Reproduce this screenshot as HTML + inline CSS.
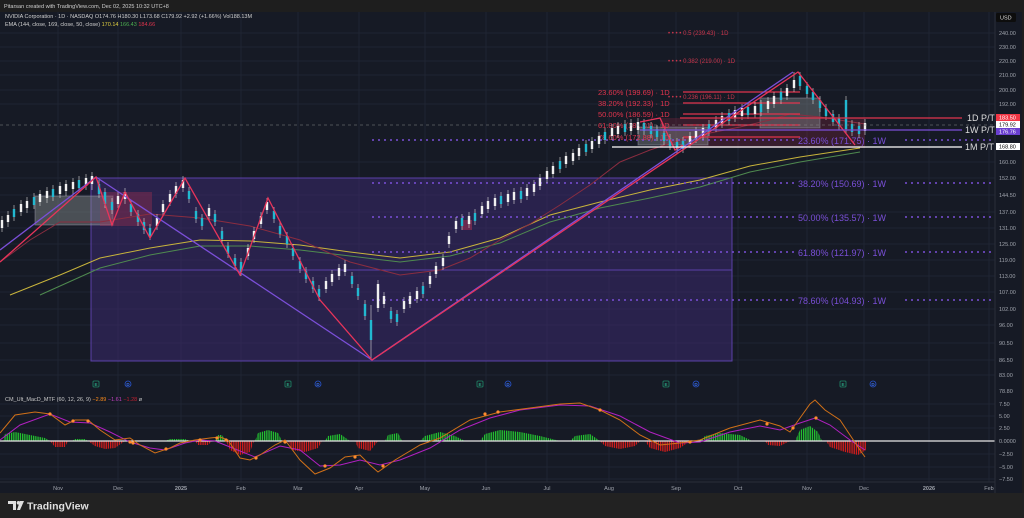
<!DOCTYPE html>
<html><head><meta charset="utf-8"><style>
html,body{margin:0;padding:0;background:#1e1e1e;width:1024px;height:518px;overflow:hidden;font-family:"Liberation Sans",sans-serif}
svg{display:block}
</style></head><body>
<svg width="1024" height="518" viewBox="0 0 1024 518" xmlns="http://www.w3.org/2000/svg" font-family="Liberation Sans, sans-serif">
<defs>
<pattern id="pg" width="2.2" height="10" patternUnits="userSpaceOnUse"><rect width="1.3" height="10" fill="#22c030"/></pattern>
<pattern id="pr" width="2.2" height="10" patternUnits="userSpaceOnUse"><rect width="1.3" height="10" fill="#d01c1c"/></pattern>
</defs>
<rect x="0" y="0" width="1024" height="518" fill="#1e1e1e"/>
<rect x="0" y="12" width="1022" height="481" fill="#161a25"/>
<rect x="0" y="493" width="1024" height="25" fill="#222222"/>
<text x="4" y="8" font-size="5.5" fill="#cfcfcf">Pitarsan created with TradingView.com, Dec 02, 2025 10:32 UTC+8</text>
<g stroke="#1f2432" stroke-width="1">
<path d="M0 33H995M0 47H995M0 61H995M0 75H995M0 90H995M0 104H995M0 162H995M0 178H995M0 195H995M0 212H995M0 228H995M0 244H995M0 260H995M0 276H995M0 292H995M0 309H995M0 325H995M0 343H995M0 360H995M0 375H995M0 404H995M0 416H995M0 428H995M0 454H995M0 467H995M0 479H995"/>
<path d="M58 12V482M118 12V482M181 12V482M241 12V482M298 12V482M359 12V482M425 12V482M486 12V482M547 12V482M609 12V482M676 12V482M738 12V482M807 12V482M864 12V482M929 12V482M989 12V482"/>
</g>
<rect x="91" y="178" width="641" height="183" fill="#3b2a6e" fill-opacity="0.55" stroke="#5b40a8" stroke-width="1"/>
<line x1="91" y1="270" x2="732" y2="270" stroke="#5b40a8" stroke-width="1"/>
<rect x="35" y="196" width="78" height="29" fill="#8a9090" fill-opacity="0.45" stroke="#aab" stroke-opacity="0.4"/>
<rect x="100" y="192" width="52" height="34" fill="#b03050" fill-opacity="0.35"/>
<rect x="660" y="118" width="205" height="30" fill="#a02848" fill-opacity="0.25"/>
<rect x="638" y="127" width="70" height="18" fill="#8a9090" fill-opacity="0.4" stroke="#aab" stroke-opacity="0.4"/>
<rect x="760" y="98" width="60" height="30" fill="#8a9090" fill-opacity="0.4" stroke="#aab" stroke-opacity="0.4"/>
<rect x="462" y="220" width="10" height="10" fill="#b03050" fill-opacity="0.5"/>
<g fill="none" stroke-width="1">
<polyline stroke="#c8b43c" points="10,295 60,275 100,258 150,248 200,240 250,241 300,245 350,252 400,258 450,252 500,238 550,215 600,202 650,190 700,180 750,166 800,157 860,148"/>
<polyline stroke="#4f8a4f" points="40,295 100,268 150,255 200,246 250,246 300,250 350,256 400,262 450,256 500,243 550,222 600,208 650,198 700,187 750,172 800,162 860,152"/>
<polyline stroke="#8b2d40" points="0,262 30,240 60,222 100,222 150,214 200,218 250,226 300,240 350,262 400,275 440,270 470,258 500,240 530,224 560,205 590,185 620,162 650,150 680,140 710,133 740,127 770,120 790,114 820,117 865,124"/>
</g>
<g stroke="#7a4fd8" stroke-width="1.5" stroke-dasharray="2 4">
<path d="M372 140H795M905 140H995M372 183H795M905 183H995M372 217H795M905 217H995M372 252H795M905 252H995M372 300H795M905 300H995"/>
</g>
<g font-size="9" fill="#7a4fd8">
<text x="798" y="144">23.60% (171.75) · 1W</text>
<text x="798" y="187">38.20% (150.69) · 1W</text>
<text x="798" y="221">50.00% (135.57) · 1W</text>
<text x="798" y="256">61.80% (121.97) · 1W</text>
<text x="798" y="304">78.60% (104.93) · 1W</text>
</g>
<g stroke="#e0344d" stroke-width="1.2">
<path d="M683 92H800M683 103H800M683 114H800M683 125H800M683 137H800"/>
</g>
<g font-size="7.5" fill="#e0344d">
<text x="598" y="95">23.60% (199.69) · 1D</text>
<text x="598" y="106">38.20% (192.33) · 1D</text>
<text x="598" y="117">50.00% (186.59) · 1D</text>
<text x="598" y="128">61.80% (181.01) · 1D</text>
<text x="598" y="140">78.60% (172.88) · 1D</text>
</g>
<g font-size="6" fill="#c8364c">
<text x="668" y="35">• • • •  0.5 (239.43) · 1D</text>
<text x="668" y="63">• • • •  0.382 (219.00) · 1D</text>
<text x="668" y="99">• • • •  0.236 (196.11) · 1D</text>
</g>
<!-- candles: wicks -->
<path stroke="#d8d8d8" stroke-width="0.6" fill="none" d="M2 216V232M8 211V227M14 205V221M21 200V216M27 197V213M34 193V209M40 190V206M47 187V203M53 185V201M60 182V198M66 180V196M73 178V194M79 176V192M86 174V190M92 172V190M99 180V198M105 188V208M112 198V214M118 192V208M125 188V204M131 200V216M138 210V226M144 218V234M150 224V240M157 214V230M163 200V216M170 190V206M176 182V198M183 176V192M189 187V203M196 207V223M202 214V230M209 204V220M215 210V226M222 227V243M228 242V258M235 254V270M241 258V276M248 244V260M254 227V243M261 212V228M267 198V214M274 207V223M280 222V238M287 232V248M293 244V260M300 257V273M306 267V283M313 277V293M319 285V301M326 277V293M332 270V286M339 264V280M345 260V276M352 272V288M358 284V300M365 300V320M371 305V360M378 280V312M384 292V308M391 307V323M397 310V326M404 297V313M410 292V308M417 287V303M423 282V298M430 272V288M436 262V278M443 254V270M449 232V248M456 217V233M462 214V230M469 212V228M475 209V225M482 202V218M488 197V213M495 194V210M501 192V208M508 190V206M514 188V204M521 187V203M527 184V200M534 180V196M540 174V190M547 167V183M553 162V178M560 157V173M566 152V168M573 149V165M579 144V160M586 140V156M592 137V153M599 132V148M605 128V144M612 124V140M618 122V138M625 120V136M631 119V135M638 118V134M644 119V135M651 122V138M657 125V141M664 129V145M670 134V150M677 138V154M683 137V153M690 132V148M696 127V143M703 124V140M709 120V136M716 116V132M722 112V128M729 109V125M735 106V122M742 104V120M748 103V119M755 102V118M761 100V116M768 97V113M774 92V108M781 88V104M787 84V100M794 72V92M800 72V90M807 82V98M813 88V104M820 96V112M826 104V120M833 110V126M839 114V130M846 96V133M852 120V136M859 122V138M865 119V135"/>
<!-- white bodies -->
<path stroke="#f0f0f0" stroke-width="2.4" fill="none" d="M2 220V228M8 215V222M21 204V212M27 201V208M40 194V202M47 191V198M60 186V194M66 184V191M73 182V189M86 178V186M92 176V184M118 196V204M125 192V199M157 218V226M163 204V212M170 194V202M176 186V194M183 180V188M209 208V216M248 248V256M254 231V239M261 216V224M267 202V210M326 281V289M332 274V282M339 268V276M345 264V272M378 284V308M384 296V304M404 301V309M410 296V304M417 291V299M430 276V284M436 266V274M443 258V266M449 236V244M456 221V229M469 216V224M482 206V214M488 201V209M495 198V206M508 194V202M514 192V200M527 188V196M534 184V192M540 178V186M547 171V179M553 166V174M566 156V164M573 153V161M579 148V156M592 141V149M599 136V144M612 128V136M618 126V134M631 123V131M638 122V130M690 136V144M696 131V139M703 128V136M716 120V128M722 116V124M735 110V118M742 108V116M755 106V114M768 101V109M774 96V104M787 88V96M794 80V88M865 123V131"/>
<!-- cyan bodies -->
<path stroke="#22b8d0" stroke-width="2.4" fill="none" d="M14 209V217M34 197V205M53 189V197M79 180V188M99 184V194M105 192V204M112 202V210M131 204V212M138 214V222M144 222V230M150 228V236M189 191V199M196 211V219M202 218V226M215 214V222M222 231V239M228 246V254M235 258V266M241 262V272M274 211V219M280 226V234M287 236V244M293 248V256M300 261V269M306 271V279M313 281V289M319 289V297M352 276V284M358 288V296M365 304V316M371 320V340M391 311V319M397 314V322M423 286V294M462 218V226M475 213V221M501 196V204M521 191V199M560 161V169M586 144V152M605 132V140M625 124V132M644 123V131M651 126V134M657 129V137M664 133V141M670 138V146M677 142V150M683 141V149M709 124V132M729 113V121M748 107V115M761 104V112M781 92V100M800 76V86M807 86V94M813 92V100M820 100V108M826 108V116M833 114V122M839 118V126M846 100V129M852 124V132M859 126V134"/>
<g fill="none" stroke-width="1.3">
<polyline stroke="#7b4fd8" points="0,250 96,177 372,360 793,72"/>
<polyline stroke="#e8345a" points="0,262 96,177 112,225 125,192 150,238 185,178 240,275 268,198 320,300 372,360 798,72 855,145"/>
<polyline stroke="#e8345a" points="640,122 660,118 675,150 683,145"/>
</g>
<line x1="0" y1="125" x2="995" y2="125" stroke="#888" stroke-width="0.6" stroke-dasharray="3 3"/>
<line x1="680" y1="118" x2="962" y2="118" stroke="#e0344d" stroke-width="1.2"/>
<line x1="640" y1="130" x2="962" y2="130" stroke="#7b4fd8" stroke-width="1.2"/>
<line x1="612" y1="147" x2="962" y2="147" stroke="#ffffff" stroke-width="1.2"/>
<g font-size="9" fill="#ddd">
<text x="967" y="121">1D P/T</text><text x="965" y="133">1W P/T</text><text x="965" y="150">1M P/T</text>
</g>
<g font-size="5.5" fill="#a0a4ad">
<text x="999" y="35">240.00</text><text x="999" y="49">230.00</text><text x="999" y="63">220.00</text><text x="999" y="77">210.00</text><text x="999" y="92">200.00</text><text x="999" y="106">192.00</text><text x="999" y="164">160.00</text><text x="999" y="180">152.00</text><text x="999" y="197">144.50</text><text x="999" y="214">137.00</text><text x="999" y="230">131.00</text><text x="999" y="246">125.00</text><text x="999" y="262">119.00</text><text x="999" y="278">113.00</text><text x="999" y="294">107.00</text><text x="999" y="311">102.00</text><text x="999" y="327">96.00</text><text x="999" y="345">90.50</text><text x="999" y="362">86.50</text><text x="999" y="377">83.00</text><text x="999" y="393">78.80</text>
<text x="999" y="406">7.50</text><text x="999" y="418">5.00</text><text x="999" y="430">2.50</text><text x="999" y="443">0.0000</text><text x="999" y="456">−2.50</text><text x="999" y="469">−5.00</text><text x="999" y="481">−7.50</text>
</g>
<rect x="996" y="13" width="20" height="9" rx="1.5" fill="#0d0d0d"/>
<text x="1000" y="19.5" font-size="5.5" fill="#ddd">USD</text>
<rect x="996" y="114" width="24" height="7" fill="#f23645"/><text x="999" y="119.5" font-size="5.5" fill="#fff">183.50</text>
<rect x="996" y="121" width="24" height="7" fill="#fff"/><text x="999" y="126.5" font-size="5.5" fill="#000">179.92</text>
<rect x="996" y="128" width="24" height="7" fill="#6a3fd0"/><text x="999" y="133.5" font-size="5.5" fill="#fff">176.76</text>
<rect x="996" y="143" width="24" height="7" fill="#fff"/><text x="999" y="148.5" font-size="5.5" fill="#000">168.80</text>
<text x="5" y="18" font-size="5.5" fill="#d0d0d0">NVIDIA Corporation · 1D · NASDAQ  O174.76  H180.30  L173.68  C179.92  +2.92 (+1.66%)  Vol188.13M</text>
<text x="5" y="26" font-size="5.5" fill="#d0d0d0">EMA (144, close, 169, close, 50, close) <tspan fill="#e0d040">170.14</tspan> <tspan fill="#4caf50">166.43</tspan> <tspan fill="#e0344d">184.66</tspan></text>
<g font-size="5" font-weight="bold" text-anchor="middle" stroke-width="0.8" fill="none">
<rect x="93" y="381" width="6" height="6" rx="1" stroke="#1f8a6a"/><circle cx="128" cy="384" r="3" stroke="#2855d0"/>
<rect x="285" y="381" width="6" height="6" rx="1" stroke="#1f8a6a"/><circle cx="318" cy="384" r="3" stroke="#2855d0"/>
<rect x="477" y="381" width="6" height="6" rx="1" stroke="#1f8a6a"/><circle cx="508" cy="384" r="3" stroke="#2855d0"/>
<rect x="663" y="381" width="6" height="6" rx="1" stroke="#1f8a6a"/><circle cx="696" cy="384" r="3" stroke="#2855d0"/>
<rect x="840" y="381" width="6" height="6" rx="1" stroke="#1f8a6a"/><circle cx="873" cy="384" r="3" stroke="#2855d0"/>
</g>
<g font-size="4.5" font-weight="bold" text-anchor="middle">
<text x="96" y="386" fill="#2aa080">E</text><text x="128" y="386" fill="#3a70f0">D</text>
<text x="288" y="386" fill="#2aa080">E</text><text x="318" y="386" fill="#3a70f0">D</text>
<text x="480" y="386" fill="#2aa080">E</text><text x="508" y="386" fill="#3a70f0">D</text>
<text x="666" y="386" fill="#2aa080">E</text><text x="696" y="386" fill="#3a70f0">D</text>
<text x="843" y="386" fill="#2aa080">E</text><text x="873" y="386" fill="#3a70f0">D</text>
</g>
<text x="5" y="401" font-size="5.5" fill="#c8c8c8">CM_Ult_MacD_MTF (60, 12, 26, 9) <tspan fill="#ff8c1a">−2.89</tspan> <tspan fill="#c040c0">−1.61</tspan> <tspan fill="#c02030">−1.28</tspan> ø</text>
<!-- histogram -->
<path fill="url(#pg)" d="M3 441L5 434L15 432L25 434L35 436L45 438L50 441ZM72 441L75 439L85 439L88 441ZM165 441L170 439L185 439L190 441ZM215 441L218 435L222 435L226 441ZM255 441L258 433L268 430L278 433L282 441ZM325 441L328 436L340 434L350 441ZM385 441L388 435L398 433L402 441ZM420 441L425 436L440 432L455 436L465 441ZM480 441L485 434L500 430L520 432L540 436L560 441ZM570 441L575 436L590 434L600 441ZM700 441L705 436L720 433L740 435L752 441ZM795 441L800 430L810 426L818 432L822 441Z"/>
<path fill="url(#pr)" d="M50 441L55 447L65 447L68 441ZM88 441L95 446L105 449L115 448L125 441ZM195 441L198 445L208 445L212 441ZM226 441L230 450L240 455L250 452L254 441ZM288 441L292 450L305 452L318 448L322 441ZM355 441L358 448L370 451L378 441ZM600 441L605 446L620 449L635 446L640 441ZM645 441L650 448L665 452L680 448L690 441ZM765 441L768 445L780 446L790 441ZM826 441L830 447L845 452L858 455L866 450L866 441Z"/>
<line x1="0" y1="441" x2="995" y2="441" stroke="#e8e8e8" stroke-width="1.2"/>
<polyline fill="none" stroke="#b020c0" stroke-width="1" points="0,440 20,425 50,414 70,422 90,423 110,432 130,442 150,448 165,450 185,443 200,440 215,441 230,447 255,457 280,446 300,450 320,466 340,465 360,460 380,465 400,460 430,448 460,430 490,418 520,410 560,405 590,406 620,416 650,432 680,443 700,442 730,432 760,426 780,430 800,423 815,418 830,425 850,440 865,450"/>
<polyline fill="none" stroke="#d07018" stroke-width="1" points="0,433 15,415 35,412 50,414 65,425 75,420 88,420 100,430 115,440 130,438 140,445 155,453 170,448 180,443 195,440 210,438 220,437 228,440 240,458 250,460 260,455 275,445 285,440 300,460 315,474 330,468 345,457 360,455 370,465 378,472 395,460 420,445 440,438 470,420 500,412 530,408 560,404 580,403 600,410 620,420 640,435 660,445 680,443 700,440 730,428 760,420 780,426 790,432 800,418 810,404 815,400 825,410 840,420 860,450 865,457"/>
<g fill="#ff8c30">
<circle cx="50" cy="414" r="1.6"/><circle cx="73" cy="421" r="1.6"/><circle cx="88" cy="421" r="1.6"/><circle cx="130" cy="442" r="1.6"/><circle cx="133" cy="443" r="1.6"/><circle cx="166" cy="449" r="1.6"/><circle cx="200" cy="440" r="1.6"/><circle cx="217" cy="438" r="1.6"/><circle cx="226" cy="440" r="1.6"/><circle cx="256" cy="458" r="1.6"/><circle cx="285" cy="442" r="1.6"/><circle cx="325" cy="466" r="1.6"/><circle cx="355" cy="457" r="1.6"/><circle cx="383" cy="466" r="1.6"/><circle cx="485" cy="414" r="1.6"/><circle cx="498" cy="412" r="1.6"/><circle cx="600" cy="410" r="1.6"/><circle cx="690" cy="442" r="1.6"/><circle cx="767" cy="424" r="1.6"/><circle cx="793" cy="428" r="1.6"/><circle cx="816" cy="418" r="1.6"/>
</g>
<line x1="0" y1="482" x2="995" y2="482" stroke="#2a2e39"/>
<line x1="995" y1="12" x2="995" y2="493" stroke="#2a2e39"/>
<g font-size="5.5" fill="#a0a4ad" text-anchor="middle">
<text x="58" y="490">Nov</text><text x="118" y="490">Dec</text><text x="181" y="490" font-weight="bold">2025</text><text x="241" y="490">Feb</text><text x="298" y="490">Mar</text><text x="359" y="490">Apr</text><text x="425" y="490">May</text><text x="486" y="490">Jun</text><text x="547" y="490">Jul</text><text x="609" y="490">Aug</text><text x="676" y="490">Sep</text><text x="738" y="490">Oct</text><text x="807" y="490">Nov</text><text x="864" y="490">Dec</text><text x="929" y="490" font-weight="bold">2026</text><text x="989" y="490">Feb</text>
</g>
<g transform="translate(8,500)">
<path d="M0 1 H8 V10 H5 V4 H0 Z" fill="#e0e0e0"/>
<circle cx="10.5" cy="2.8" r="1.8" fill="#e0e0e0"/>
<path d="M12 1 H16 L12 10 H9 Z" fill="#e0e0e0"/>
<text x="19" y="9.5" font-size="10.5" font-weight="bold" fill="#e0e0e0">TradingView</text>
</g>
</svg>
</body></html>
